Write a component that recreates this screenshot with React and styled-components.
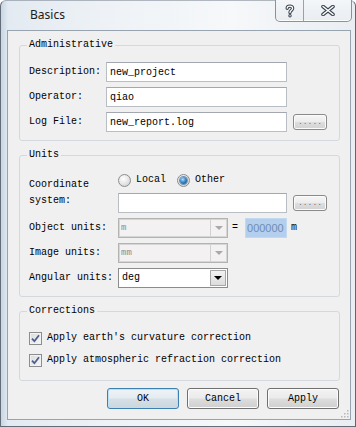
import React from 'react';
import styled, { createGlobalStyle, css } from 'styled-components';

const mono = `"Liberation Mono", "DejaVu Sans Mono", monospace`;
const sans = `"Liberation Sans", Arial, sans-serif`;

const Global = createGlobalStyle`
  html, body { margin: 0; padding: 0; background: #ffffff; }
  body { width: 356px; height: 427px; overflow: hidden; }
`;

const Window = styled.div`
  width: 356px;
  height: 427px;
  box-sizing: border-box;
  display: flex;
  flex-direction: column;
  border: 1px solid rgba(55, 65, 78, 0.75);
  border-top-color: rgba(120, 132, 145, 0.55);
  border-radius: 6px 6px 0 0;
  background: linear-gradient(90deg, #c7d6e5 0px, #e3eaf1 7px, #eef2f6 30%, #f6f8fa 65%, #eaeef2 100%);
`;

const TitleBar = styled.div`
  height: 29px;
  flex: none;
  display: flex;
  align-items: flex-start;
  padding-left: 29px;
`;

const Title = styled.span`
  font: 12px/28px "Noto Sans", "Open Sans", sans-serif;
  color: #1b1b1b;
`;

const Captions = styled.div`
  margin-left: auto;
  margin-right: 3px;
  margin-top: -1px;
  display: flex;
  height: 21px;
  border: 1px solid rgba(70, 80, 92, 0.6);
  border-top: none;
  border-radius: 0 0 5px 5px;
  background: linear-gradient(#f4f6f8, #e9edf1);
  box-shadow: inset 0 -1px 0 rgba(255, 255, 255, 0.8);
  overflow: hidden;
`;

const CaptionButton = styled.div`
  width: ${p => p.$w}px;
  display: flex;
  align-items: center;
  justify-content: center;
  & + & { border-left: 1px solid rgba(70, 80, 92, 0.5); }
`;

const Client = styled.div`
  flex: 1;
  position: relative;
  margin: 0 4px 6px 6px;
  border: 1px solid #97a3af;
  background: #f0f0f0;
  padding: 0 10px 10px 11px;
  display: flex;
  flex-direction: column;
  font: 10px/14px ${mono};
  color: #000;
`;

const Group = styled.fieldset`
  margin: 7px 0 0 0;
  padding: 10px 10px ${p => p.$pb}px 9px;
  border: 1px solid #d3d9de;
  border-radius: 3px;
  min-inline-size: 0;
  display: flex;
  flex-direction: column;
  gap: ${p => p.$gap}px;
`;

const Legend = styled.legend`
  padding: 0 2px;
  margin-left: -2px;
  font: 10px/14px ${mono};
  color: #000;
`;

const Row = styled.div`
  display: flex;
  align-items: center;
  height: ${p => p.$h || 20}px;
`;

const Label = styled.span`
  width: ${p => p.$w}px;
  flex: none;
  white-space: pre-line;
  line-height: ${p => p.$lh || 14}px;
`;

const TextBox = styled.input`
  width: ${p => p.$w}px;
  height: 20px;
  box-sizing: border-box;
  margin: 0;
  padding: 0 0 0 3px;
  border: 1px solid #b9bec5;
  border-top-color: #a3a8b0;
  background: #fff;
  font: 10px ${mono};
  color: #000;
  outline: none;
`;

const SmallButton = styled.div`
  width: 34px;
  height: 16px;
  box-sizing: border-box;
  margin-left: 6px;
  border: 1px solid #8a8a8a;
  border-radius: 3px;
  background: linear-gradient(#f6f6f6 0%, #ececec 48%, #dedede 52%, #d2d2d2 100%);
  box-shadow: inset 0 0 0 1px #fbfbfb;
  display: flex;
  align-items: center;
  justify-content: center;
  font: 8px/1 ${mono};
  color: #707070;
`;

const FieldColumn = styled.div`
  display: flex;
  flex-direction: column;
  gap: 5px;
`;

const RadioItem = styled.label`
  display: flex;
  align-items: center;
  gap: 5px;
  margin-right: ${p => p.$mr || 0}px;
`;

const Radio = styled.span`
  position: relative;
  width: 13px;
  height: 13px;
  box-sizing: border-box;
  border-radius: 50%;
  border: 1px solid #8b8d8f;
  background: radial-gradient(circle at 40% 35%, #ffffff 0%, #e4e4e4 55%, #c4c4c4 100%);
  ${p => p.$checked && css`
    &::after {
      content: '';
      position: absolute;
      inset: 2px;
      border-radius: 50%;
      background: radial-gradient(circle at 40% 35%, #b5e0ff 0%, #3a88c8 45%, #123e68 100%);
      box-shadow: 0 0 0 1px #6a93b8;
    }
  `}
`;

const Combo = styled.div`
  width: 110px;
  height: 20px;
  box-sizing: border-box;
  flex: none;
  display: flex;
  border: 1px solid ${p => (p.$disabled ? '#b3b3b3' : '#8c8c8c')};
  box-shadow: inset 0 0 0 1px ${p => (p.$disabled ? '#d6d6d6' : '#ffffff')};
  background: ${p => (p.$disabled ? '#f3f1f1' : '#ffffff')};
`;

const ComboText = styled.span`
  flex: 1;
  padding-left: ${p => (p.$disabled ? 2 : 3)}px;
  font: ${p => (p.$disabled ? `9px/18px ${mono}` : `10px/18px ${mono}`)};
  color: ${p => (p.$disabled ? '#8c8c8c' : '#000')};
`;

const ComboArrow = styled.span`
  width: ${p => (p.$disabled ? 16 : 14)}px;
  display: flex;
  align-items: center;
  justify-content: center;
  ${p => p.$disabled
    ? css`border-left: 1px solid #d2d2d2;`
    : css`
      margin: 1px;
      border: 1px solid #a8a8a8;
      background: linear-gradient(#f2f2f2, #dcdcdc);
    `}
  &::after {
    content: '';
    border-left: 4px solid transparent;
    border-right: 4px solid transparent;
    border-top: 4px solid ${p => (p.$disabled ? '#a9a9a9' : '#000')};
  }
`;

const Equals = styled.span`
  margin: 0 7px 0 4px;
`;

const Highlight = styled.span`
  width: 42px;
  height: 20px;
  box-sizing: border-box;
  padding-left: 1px;
  background: #b4cfee;
  border: 1px solid #c3d8f1;
  font: 11px/18px ${sans};
  color: #6f8db3;
`;

const Unit = styled.span`
  margin-left: 4px;
`;

const CheckItem = styled.label`
  display: flex;
  align-items: center;
  gap: 5px;
  height: 20px;
`;

const CheckBox = styled.span`
  width: 13px;
  height: 13px;
  box-sizing: border-box;
  border: 1px solid #8b8d8f;
  background: linear-gradient(135deg, #dcdcdc, #f6f6f6);
  box-shadow: inset 0 0 0 1px #f2f2f2;
  display: flex;
  align-items: center;
  justify-content: center;
`;

const ButtonRow = styled.div`
  display: flex;
  justify-content: flex-end;
  gap: 8px;
  margin: 7px 1px 0 0;
`;

const Button = styled.button`
  width: 72px;
  height: 21px;
  box-sizing: border-box;
  padding: 0;
  border: 1px solid #707070;
  border-radius: 3px;
  background: linear-gradient(#f3f3f3 0%, #ebebeb 48%, #dddddd 52%, #cfcfcf 100%);
  box-shadow: inset 0 0 0 1px #fcfcfc;
  font: 10px/1 ${mono};
  color: #000;
  ${p => p.$default && css`
    border-color: #3c7fb1;
    box-shadow: inset 0 0 0 1px #b9e0f5;
    background: linear-gradient(#eef3f6 0%, #e4ecf1 48%, #d6e0e6 52%, #cbd6dd 100%);
  `}
`;

const Grip = styled.svg`
  position: absolute;
  right: 1px;
  bottom: 1px;
`;

const HelpIcon = () => (
  <svg width="10" height="14" viewBox="0 0 10 14">
    <path d="M2.2 4.2 C2.2 1.6 7.6 1.4 7.6 4.2 C7.6 6.4 5 6.3 5 8.6" fill="none" stroke="#3a4450" strokeWidth="3.4" strokeLinecap="round" />
    <circle cx="5" cy="11.8" r="1.7" fill="#3a4450" />
    <path d="M2.2 4.2 C2.2 1.6 7.6 1.4 7.6 4.2 C7.6 6.4 5 6.3 5 8.6" fill="none" stroke="#ffffff" strokeWidth="1.3" strokeLinecap="round" />
    <circle cx="5" cy="11.8" r="0.7" fill="#ffffff" />
  </svg>
);

const CloseIcon = () => (
  <svg width="14" height="11" viewBox="0 0 14 11">
    <path d="M2 1.5 L12 9.5 M12 1.5 L2 9.5" stroke="#3a4450" strokeWidth="3.6" strokeLinecap="round" />
    <path d="M2 1.5 L12 9.5 M12 1.5 L2 9.5" stroke="#ffffff" strokeWidth="1.5" strokeLinecap="round" />
  </svg>
);

const Check = () => (
  <svg width="9" height="9" viewBox="0 0 9 9">
    <path d="M1 4.6 L3.4 7.2 L8 1.2" fill="none" stroke="#4b5e8e" strokeWidth="1.8" />
  </svg>
);

export default function App() {
  return (
    <>
      <Global />
      <Window>
        <TitleBar>
          <Title>Basics</Title>
          <Captions>
            <CaptionButton $w={27}><HelpIcon /></CaptionButton>
            <CaptionButton $w={47}><CloseIcon /></CaptionButton>
          </Captions>
        </TitleBar>
        <Client>
          <Group $pb={8} $gap={5}>
            <Legend>Administrative</Legend>
            <Row>
              <Label $w={77}>Description:</Label>
              <TextBox $w={181} readOnly defaultValue="new_project" />
            </Row>
            <Row>
              <Label $w={77}>Operator:</Label>
              <TextBox $w={181} readOnly defaultValue="qiao" />
            </Row>
            <Row>
              <Label $w={77}>Log File:</Label>
              <TextBox $w={181} readOnly defaultValue="new_report.log" />
              <SmallButton>.....</SmallButton>
            </Row>
          </Group>

          <Group $pb={8} $gap={5}>
            <Legend>Units</Legend>
            <Row $h={41}>
              <Label $w={89} $lh={16}>{'Coordinate\nsystem:'}</Label>
              <FieldColumn>
                <Row $h={16}>
                  <RadioItem $mr={11}><Radio />Local</RadioItem>
                  <RadioItem><Radio $checked />Other</RadioItem>
                </Row>
                <Row>
                  <TextBox $w={169} readOnly defaultValue="" />
                  <SmallButton>.....</SmallButton>
                </Row>
              </FieldColumn>
            </Row>
            <Row>
              <Label $w={89}>Object units:</Label>
              <Combo $disabled>
                <ComboText $disabled>m</ComboText>
                <ComboArrow $disabled />
              </Combo>
              <Equals>=</Equals>
              <Highlight>000000</Highlight>
              <Unit>m</Unit>
            </Row>
            <Row>
              <Label $w={89}>Image units:</Label>
              <Combo $disabled>
                <ComboText $disabled>mm</ComboText>
                <ComboArrow $disabled />
              </Combo>
            </Row>
            <Row>
              <Label $w={89}>Angular units:</Label>
              <Combo>
                <ComboText>deg</ComboText>
                <ComboArrow />
              </Combo>
            </Row>
          </Group>

          <Group $pb={10} $gap={2}>
            <Legend>Corrections</Legend>
            <CheckItem><CheckBox><Check /></CheckBox>Apply earth's curvature correction</CheckItem>
            <CheckItem><CheckBox><Check /></CheckBox>Apply atmospheric refraction correction</CheckItem>
          </Group>

          <ButtonRow>
            <Button $default>OK</Button>
            <Button>Cancel</Button>
            <Button>Apply</Button>
          </ButtonRow>

          <Grip width="9" height="9" viewBox="0 0 9 9">
            {[[7, 1], [7, 4], [4, 4], [7, 7], [4, 7], [1, 7]].map(([x, y]) => (
              <rect key={`${x}-${y}`} x={x} y={y} width="1.5" height="1.5" fill="#b8b8b8" />
            ))}
          </Grip>
        </Client>
      </Window>
    </>
  );
}
